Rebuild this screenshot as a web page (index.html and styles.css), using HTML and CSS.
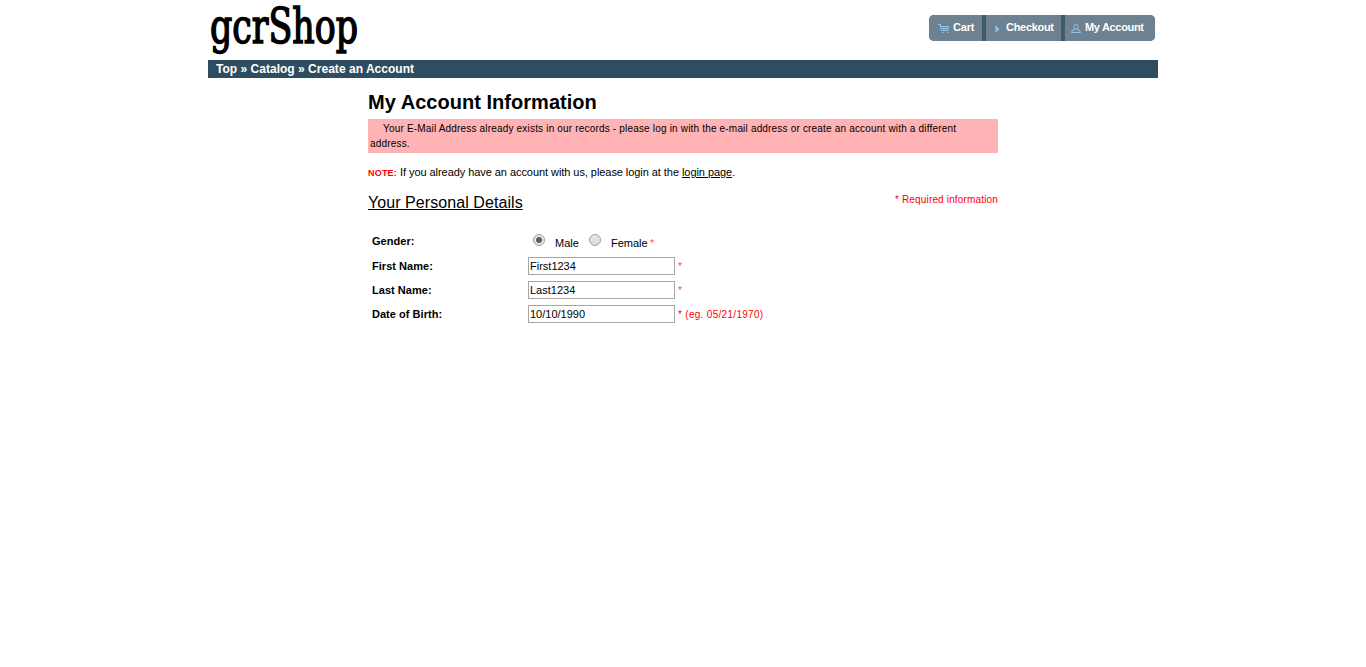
FILE: index.html
```html
<!DOCTYPE html>
<html lang="en">
<head>
<meta charset="utf-8">
<title>gcrShop</title>
<link rel="stylesheet" href="styles.css">
</head>
<body>
<div class="wrapper">
  <header class="header">
    <a class="logo"><svg width="152" height="60" viewBox="0 0 152 60" role="img" aria-label="gcrShop"><text class="logo-text" x="2" y="43" textLength="148" lengthAdjust="spacingAndGlyphs">gcrShop</text></svg></a>
    <nav class="buttons">
      <a class="button cart"><svg class="icon" width="12" height="9" viewBox="0 0 12 9"><path d="M0 .5h2.500v3L3.500 6.500H11M3 2.500h8.500M3.500 4.500h7.500"/><path class="mesh" d="M5.500 2v4M7.500 2v4M9.500 2v4"/><path d="M4 8.500h1.500M9 8.500h1.500"/></svg><span>Cart</span></a>
      <a class="button checkout"><svg class="icon" width="5" height="8" viewBox="0 0 5 8"><path class="solid" d="M.5 0 4.500 4 .5 8z"/></svg><span>Checkout</span></a>
      <a class="button account"><svg class="icon" width="10" height="9" viewBox="0 0 10 9"><circle cx="5" cy="2.800" r="2.300"/><path d="M3.500 5v1H1.500L.5 8.500h9L8.500 6h-2V5"/></svg><span>My Account</span></a>
    </nav>
  </header>
  <div class="breadcrumb">Top » Catalog » Create an Account</div>
  <main class="content">
    <h1>My Account Information</h1>
    <div class="error"><span class="error-first">Your E-Mail Address already exists in our records - please log in with the e-mail address or create an account with a different</span><br><span class="error-last">address.</span></div>
    <p class="note"><b>NOTE:</b> If you already have an account with us, please login at the <a>login page</a>.</p>
    <div class="section-head"><h2>Your Personal Details</h2><span class="required">* Required information</span></div>
    <form class="fields">
      <div class="row gender"><label>Gender:</label><div class="radios"><i class="radio checked"></i><span class="male">Male</span><i class="radio"></i><span class="female">Female</span><em>*</em></div></div>
      <div class="row"><label>First Name:</label><input type="text" value="First1234"><em>*</em></div>
      <div class="row"><label>Last Name:</label><input type="text" value="Last1234"><em>*</em></div>
      <div class="row"><label>Date of Birth:</label><input type="text" value="10/10/1990"><em class="hint">* (eg. 05/21/1970)</em></div>
    </form>
  </main>
</div>
</body>
</html>
```
FILE: styles.css
```css
* { box-sizing: border-box; }
body { margin: 0; background: #fff; color: #000; font: 11px/15px "Liberation Sans", Arial, sans-serif; }
.wrapper { width: 950px; margin: 0 auto; }
.header { height: 60px; display: flex; justify-content: space-between; align-items: flex-start; }
.logo { height: 60px; }
.logo svg { display: block; overflow: visible; }
.logo-text { font: 48px "DejaVu Serif Condensed", "DejaVu Serif", serif; stroke: #000; stroke-width: 1.5px; }
.buttons { display: flex; gap: 4px; margin: 15px 3px 0 0; height: 26px; border-radius: 5px; overflow: hidden; background: #3e5a6d; }
.button { display: flex; background: #6e8190; color: #fff; font-weight: bold; line-height: 25px; height: 26px; white-space: nowrap; }
.icon { flex: none; fill: none; stroke: #92c4e6; stroke-width: 1; }
.icon .solid { fill: #92c4e6; stroke: none; }
.icon .mesh { stroke-width: .6; }
.cart { width: 53px; padding-left: 9px; letter-spacing: -.2px; }
.cart .icon { margin: 9px 3px 0 0; }
.checkout { width: 75px; padding-left: 9px; letter-spacing: -.3px; }
.checkout .icon { margin: 10px 6px 0 0; }
.account { width: 90px; padding-left: 6px; letter-spacing: -.33px; }
.account .icon { margin: 9px 4px 0 0; }
.breadcrumb { height: 18px; padding-left: 8px; background: #2f4d60; color: #fff; font-size: 12px; font-weight: bold; line-height: 18px; letter-spacing: .02px; }
.content { width: 630px; margin-left: 160px; }
h1 { margin: 0; padding-top: 12px; height: 41px; font-size: 20px; line-height: 24px; letter-spacing: .03px; }
.error { height: 34px; padding: 2px; background: #ffb3b5; font-size: 10px; line-height: 15px; white-space: nowrap; }
.error-first { margin-left: 13px; letter-spacing: .18px; }
.error-last { letter-spacing: .18px; }
.note { margin: 12px 0 0; height: 15px; white-space: nowrap; letter-spacing: -.06px; }
.note b { color: #f00; font-size: 9px; letter-spacing: .2px; }
.note a { text-decoration: underline; }
.section-head { display: flex; justify-content: space-between; height: 50px; padding-top: 12px; }
h2 { margin: 1px 0 0; font-size: 16px; font-weight: normal; line-height: 20px; letter-spacing: .07px; text-decoration: underline; }
.required { color: #f00; font-size: 10px; letter-spacing: .16px; }
.fields { margin: 0; }
.row { display: flex; align-items: center; height: 24px; padding-left: 4px; }
.row label { width: 156px; font-weight: bold; letter-spacing: .03px; }
.row input { width: 147px; height: 18px; margin: 0; padding: 0 1px; border: 1px solid #a6a6a6; background: #fff; font: 11px "Liberation Sans", Arial, sans-serif; color: #000; }
em { margin-left: 3px; color: #f00; font-size: 10px; font-style: normal; opacity: .75; }
.hint { letter-spacing: .3px; opacity: 1; }
.row.gender { align-items: flex-start; padding-top: 4px; }
.radios { display: flex; padding-left: 5px; line-height: 19px; }
.radio { width: 12px; height: 12px; border: 1px solid #a2a2a2; border-radius: 50%; background: linear-gradient(#e8e8e8, #dcdcdc); }
.checked { background: radial-gradient(circle, #5c5c5c 0 2.500px, #e4e4e4 3.500px); }
.radio + span { margin-left: 10px; }
.male { width: 24px; margin-right: 10px; }
.female { width: 36px; }
```
